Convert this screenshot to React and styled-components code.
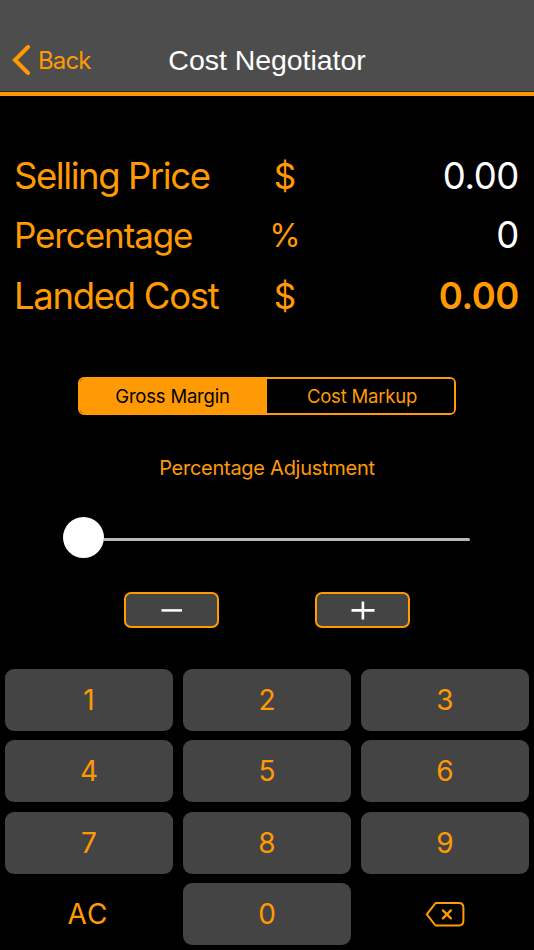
import React, { useState } from "react";
import styled, { createGlobalStyle, ThemeProvider } from "styled-components";

const theme = {
  accent: "#ff9a05",
  bar: "#4d4d4d",
  key: "#444444",
  background: "#000000",
};

const GlobalStyle = createGlobalStyle`
  * {
    box-sizing: border-box;
  }

  body {
    margin: 0;
    background: #000;
  }

  button {
    padding: 0;
    border: 0;
    background: none;
    font-family: inherit;
  }
`;

const SScreen = styled.div`
  display: flex;
  flex-direction: column;
  width: 534px;
  height: 950px;
  overflow: hidden;
  background: ${(props) => props.theme.background};
  color: ${(props) => props.theme.accent};
  font-family: Inter, "Liberation Sans", sans-serif;
`;

const SHeader = styled.header`
  display: grid;
  grid-template-columns: 167px 200px 167px;
  align-items: end;
  height: 96px;
  padding-bottom: 12px;
  background: ${(props) => props.theme.bar};
  border-bottom: 4px solid ${(props) => props.theme.accent};
  box-shadow: inset 0 -1px 0 #2c2a2a;
`;

const SBack = styled.button`
  display: flex;
  align-items: center;
  gap: 6px;
  height: 40px;
  padding-left: 12px;
  color: ${(props) => props.theme.accent};
  font-size: 24px;
  letter-spacing: -0.9px;
`;

const STitle = styled.h1`
  margin: 0;
  color: #fff;
  font-family: "Liberation Sans", sans-serif;
  font-size: 28.5px;
  font-weight: 400;
  line-height: 40px;
  letter-spacing: -0.05px;
  text-align: center;
  white-space: nowrap;
`;

const SValues = styled.section`
  display: grid;
  grid-template-rows: 59px 60px 61px;
  margin-top: 50px;
  padding: 0 15px 0 14px;
`;

const SValueRow = styled.div`
  display: grid;
  grid-template-columns: 241px 60px 1fr;
  align-items: center;
  font-size: 36.5px;
  white-space: nowrap;
`;

const SLabel = styled.span`
  font-size: ${(props) => props.$size}px;
  letter-spacing: ${(props) => props.$spacing}px;
`;

const SUnit = styled.span`
  text-align: center;
  font-size: ${(props) => props.$size}px;
`;

const SAmount = styled.span`
  color: ${(props) => (props.$result ? props.theme.accent : "#fff")};
  font-weight: ${(props) => (props.$result ? 600 : 400)};
  letter-spacing: -0.4px;
  text-align: right;
`;

const SSegments = styled.div`
  display: grid;
  grid-template-columns: 1fr 1fr;
  align-self: center;
  width: 378px;
  height: 38px;
  margin-top: 51px;
  overflow: hidden;
  border: 2px solid ${(props) => props.theme.accent};
  border-radius: 6px;
`;

const SSegment = styled.button`
  padding: ${(props) => (props.$last ? "0 0 0 3px" : "0 2px 0 0")};
  background: ${(props) => (props.$active ? props.theme.accent : "#000")};
  color: ${(props) => (props.$active ? "#000" : props.theme.accent)};
  font-size: 18.5px;
  letter-spacing: -0.2px;
`;

const SAdjustment = styled.div`
  margin-top: 38px;
  font-size: 20px;
  line-height: 30px;
  letter-spacing: -0.27px;
  text-align: center;
`;

const SSlider = styled.div`
  display: flex;
  align-items: center;
  height: 41px;
  margin: 34px 64px 0 63px;
`;

const SKnob = styled.div`
  flex: none;
  width: 41px;
  height: 41px;
  border-radius: 50%;
  background: #fff;
`;

const STrack = styled.div`
  flex: 1;
  height: 3px;
  margin-top: 3px;
  border-radius: 0 2px 2px 0;
  background: #b9b9b9;
`;

const SSteppers = styled.div`
  display: flex;
  justify-content: center;
  gap: 96px;
  margin-top: 34px;
`;

const SStepper = styled.button`
  display: flex;
  justify-content: center;
  align-items: center;
  width: 95px;
  height: 36px;
  border: 2px solid ${(props) => props.theme.accent};
  border-radius: 7px;
  background: ${(props) => props.theme.key};
`;

const SKeypad = styled.div`
  display: grid;
  grid-template-columns: repeat(3, 168px);
  grid-auto-rows: 62px;
  gap: 9.6px 10px;
  margin-top: 40.5px;
  padding-left: 5px;
`;

const SKey = styled.button`
  display: flex;
  justify-content: center;
  align-items: center;
  border-radius: 9px;
  background: ${(props) => (props.$plain ? "none" : props.theme.key)};
  color: ${(props) => props.theme.accent};
  font-size: 28px;
`;

const SClear = styled.span`
  margin-right: 2px;
  letter-spacing: 1px;
`;

const BackIcon = () => (
  <svg width="20" height="30" viewBox="0 0 20 30" fill="none">
    <path
      d="M16 2 3 15l13 13"
      stroke="currentColor"
      strokeWidth="4"
      strokeLinecap="round"
    />
  </svg>
);

const MinusIcon = () => (
  <svg width="24" height="20" viewBox="0 0 24 20">
    <path d="M1.5 10.4h20.5" stroke="#fff" strokeWidth="2.5" />
  </svg>
);

const PlusIcon = () => (
  <svg width="24" height="20" viewBox="0 0 24 20">
    <path d="M.5 10.4h23M11.9 1.4v18" stroke="#fff" strokeWidth="2.6" />
  </svg>
);

const DeleteIcon = () => (
  <svg width="40" height="26" viewBox="0 0 40 26" fill="none">
    <path
      d="M10.5 2.1H34Q38.4 2.1 38.4 6.8V19.8Q38.4 24.5 34 24.5H10.5L1.8 13.3Z"
      stroke="currentColor"
      strokeWidth="2"
      strokeLinejoin="round"
    />
    <path
      d="m17.9 9.4 8 8m0-8-8 8"
      stroke="currentColor"
      strokeWidth="2.3"
      strokeLinecap="round"
    />
  </svg>
);

const ValueRow = (props) => {
  const { label, size, spacing, unit, amount, result } = props;
  return (
    <SValueRow>
      <SLabel $size={size} $spacing={spacing}>
        {label}
      </SLabel>
      <SUnit $size={unit === "%" ? 32 : 35}>{unit}</SUnit>
      <SAmount $result={result}>{amount}</SAmount>
    </SValueRow>
  );
};

const digits = ["1", "2", "3", "4", "5", "6", "7", "8", "9"];

const App = () => {
  const [mode, setMode] = useState("margin");

  return (
    <ThemeProvider theme={theme}>
      <GlobalStyle />
      <SScreen>
        <SHeader>
          <SBack>
            <BackIcon />
            Back
          </SBack>
          <STitle>Cost Negotiator</STitle>
        </SHeader>
        <SValues>
          <ValueRow
            label="Selling Price"
            size={36.5}
            spacing={-1.42}
            unit="$"
            amount="0.00"
          />
          <ValueRow
            label="Percentage"
            size={35}
            spacing={-1.1}
            unit="%"
            amount="0"
          />
          <ValueRow
            label="Landed Cost"
            size={36.5}
            spacing={-1.3}
            unit="$"
            amount="0.00"
            result
          />
        </SValues>
        <SSegments>
          <SSegment
            $active={mode === "margin"}
            onClick={() => setMode("margin")}
          >
            Gross Margin
          </SSegment>
          <SSegment
            $last
            $active={mode === "markup"}
            onClick={() => setMode("markup")}
          >
            Cost Markup
          </SSegment>
        </SSegments>
        <SAdjustment>Percentage Adjustment</SAdjustment>
        <SSlider>
          <SKnob />
          <STrack />
        </SSlider>
        <SSteppers>
          <SStepper aria-label="Decrease">
            <MinusIcon />
          </SStepper>
          <SStepper aria-label="Increase">
            <PlusIcon />
          </SStepper>
        </SSteppers>
        <SKeypad>
          {digits.map((digit) => (
            <SKey key={digit}>{digit}</SKey>
          ))}
          <SKey $plain>
            <SClear>AC</SClear>
          </SKey>
          <SKey>0</SKey>
          <SKey $plain aria-label="Delete">
            <DeleteIcon />
          </SKey>
        </SKeypad>
      </SScreen>
    </ThemeProvider>
  );
};

export default App;
